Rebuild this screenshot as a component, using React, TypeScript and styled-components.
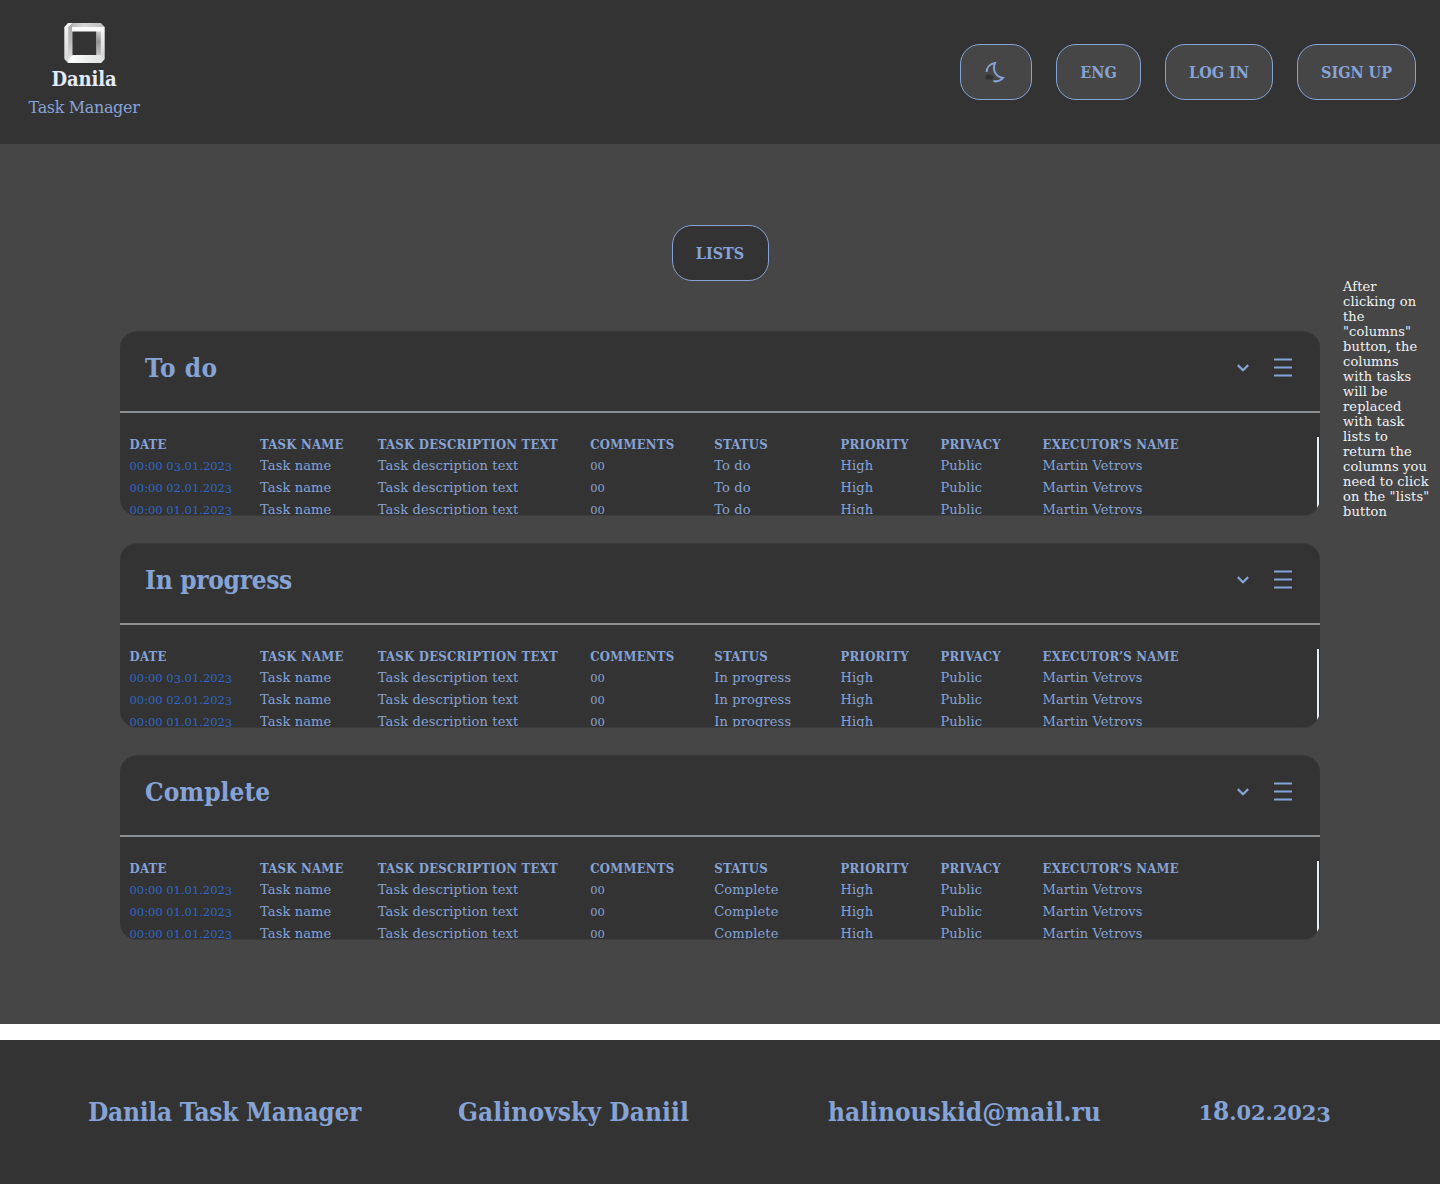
import React from "react";
import styled, { createGlobalStyle } from "styled-components";

const wide = '"DejaVu Serif", "Liberation Serif", serif';
const condensed = '"DejaVu Serif Condensed", "DejaVu Serif", serif';
const blue = "#86a3d6";
const dark = "#333333";
const grey = "#464646";

const GlobalStyle = createGlobalStyle`
  *, *::before, *::after { box-sizing: border-box; }
  body { margin: 0; background: #fff; font-family: ${wide}; }
`;

const Page = styled.div`
  display: flex;
  flex-direction: column;
  gap: 16px;
  width: 1440px;
`;

const Top = styled.div`
  display: flex;
  flex-direction: column;
`;

const Header = styled.header`
  display: flex;
  justify-content: space-between;
  height: 144px;
  padding: 0 24px;
  background: ${dark};
`;

const Brand = styled.div`
  display: flex;
  flex-direction: column;
  align-items: center;
  width: 120px;
  padding-top: 23px;
`;

const BrandName = styled.div`
  font: bold 20px/28px ${condensed};
  letter-spacing: -0.1px;
  color: #e4eaf8;
  margin-top: 2px;
`;

const BrandSub = styled.div`
  font-size: 16px;
  line-height: 24px;
  letter-spacing: -0.35px;
  white-space: nowrap;
  color: ${blue};
  margin-top: 3px;
`;

const Nav = styled.nav`
  display: flex;
  align-items: center;
  gap: 24px;
`;

const Button = styled.button<{ $width: number; $fill?: string }>`
  display: flex;
  align-items: center;
  justify-content: center;
  width: ${(p) => p.$width}px;
  height: 56px;
  padding: 2px 0 0;
  border: 1px solid ${blue};
  border-radius: 20px;
  background: ${(p) => p.$fill ?? grey};
  color: ${blue};
  font: bold 16px/24px ${condensed};
  white-space: nowrap;
`;

const IconButton = styled(Button)`
  padding: 0;
`;

const Main = styled.main`
  display: grid;
  grid-template-columns: 1200px 120px;
  align-items: start;
  height: 880px;
  padding: 81px 0 0 120px;
  background: ${grey};
`;

const Board = styled.section`
  display: flex;
  flex-direction: column;
  align-items: center;
  gap: 50px;
`;

const Cards = styled.div`
  display: flex;
  flex-direction: column;
  gap: 27px;
  width: 100%;
`;

const Card = styled.article`
  display: flex;
  flex-direction: column;
  height: 185px;
  border: solid #3c3c3c;
  border-width: 1px 0;
  border-radius: 17px;
  overflow: hidden;
  background: ${dark};
`;

const CardHead = styled.div`
  display: flex;
  align-items: center;
  flex: none;
  height: 81px;
  padding: 0 28px 8px 25px;
  border-bottom: 2px solid #8c8f92;
`;

const CardTitle = styled.h2<{ $spacing: number }>`
  flex: 1;
  margin: 0;
  font: bold 26px/34px ${condensed};
  letter-spacing: ${(p) => p.$spacing}px;
  color: ${blue};
`;

const Icons = styled.div`
  display: flex;
  align-items: center;
  gap: 25px;
`;

const CardBody = styled.div`
  display: flex;
  justify-content: space-between;
  padding: 24px 1px 0 9.5px;
`;

const Table = styled.div`
  display: flex;
  flex-direction: column;
  margin-top: -4px;
`;

const Row = styled.div`
  display: grid;
  grid-template-columns: 130.5px 117.8px 212.5px 124px 126.2px 100px 102px 150px;
  height: 22px;
  color: ${blue};
  white-space: nowrap;
`;

const HeadCell = styled.div`
  padding-top: 1px;
  font: bold 13px/22px ${condensed};
  letter-spacing: 0.24px;
`;

const Cell = styled.div`
  font-size: 13px;
  line-height: 22px;
  letter-spacing: 0.12px;
`;

const CountCell = styled(Cell)`
  font-size: 11.5px;
  letter-spacing: 0;
`;

const DateCell = styled(CountCell)`
  color: #3067c8;
`;

const LowDigit = styled.span<{ $drop: number }>`
  line-height: 1;
  vertical-align: -${(p) => p.$drop}px;
`;

const TallDigit = styled.span`
  font: bold 26px/1 ${condensed};
`;

const Scroll = styled.div`
  width: 2px;
  height: 90px;
  background: #e6edfa;
`;

const Note = styled.aside`
  padding: 54px 0 0 23px;
  font-size: 13px;
  line-height: 15px;
  letter-spacing: 0.12px;
  color: #f2f2f2;
  white-space: pre;
`;

const Footer = styled.footer`
  display: grid;
  grid-template-columns: 370px 370px 370.5px 1fr;
  align-items: center;
  height: 144px;
  padding-left: 88px;
  background: ${dark};
`;

const FooterText = styled.div<{ $spacing: number }>`
  font: bold 26px/34px ${condensed};
  letter-spacing: ${(p) => p.$spacing}px;
  color: ${blue};
  white-space: nowrap;
`;

const FooterDate = styled(FooterText)`
  padding-top: 2px;
  font: bold 21px/34px ${wide};
`;

const Logo = () => (
  <svg width="41" height="40" viewBox="0 0 41 40">
    <defs>
      <linearGradient id="top" x1="0" x2="1"><stop stopColor="#b5b5b5" /><stop offset=".45" stopColor="#d6d6d6" /><stop offset="1" stopColor="#bdbdbd" /></linearGradient>
      <linearGradient id="left" x1="0" y1="0" x2="0" y2="1"><stop stopColor="#f4f4f4" /><stop offset="1" stopColor="#d4d8d6" /></linearGradient>
      <linearGradient id="innerLeft" x1="0" y1="0" x2="0" y2="1"><stop stopColor="#aaa" /><stop offset=".5" stopColor="#b9b9b9" /><stop offset="1" stopColor="#dedede" /></linearGradient>
      <linearGradient id="right" x1="0" y1="0" x2="0" y2="1"><stop stopColor="#f8f8f8" /><stop offset="1" stopColor="#cdd0ce" /></linearGradient>
      <linearGradient id="innerRight" x1="0" y1="0" x2="0" y2="1"><stop stopColor="#ddd" /><stop offset=".5" stopColor="#929292" /><stop offset="1" stopColor="#c2c2c2" /></linearGradient>
      <linearGradient id="bottom" x1="0" x2="1"><stop stopColor="#fff" /><stop offset="1" stopColor="#dce0dd" /></linearGradient>
    </defs>
    <path d="M4 0H36.8L40.7 4L36 8H4Z" fill="url(#top)" />
    <path d="M4 0H8V36L4 40L.3 36V4Z" fill="url(#left)" />
    <path d="M4.3 4L8.5 0V32L4.3 36Z" fill="url(#innerLeft)" />
    <path d="M36.8 4H40.7V36L37 40H32.5V8Z" fill="url(#right)" />
    <path d="M32.5 5H36.8V32H32.5Z" fill="url(#innerRight)" />
    <path d="M5 36L8.5 32H36.8L40.5 36L37 40H4Z" fill="url(#bottom)" />
    <path d="M8 4H36.8V8.5H8Z" fill="#fafafa" />
  </svg>
);

const Moon = () => (
  <svg width="24" height="24" viewBox="0 0 24 24" fill="none">
    <circle cx="4.2" cy="17" r="2.8" fill={dark} />
    <circle cx="7.2" cy="17.6" r="2.3" fill={dark} />
    <path
      d="M2.7 12C2.6 7.8 5.5 4 11 3.1C8.5 9 10.5 16.4 19 17.9C16.4 20.8 12.5 21.8 9.4 21.1"
      stroke={blue}
      strokeWidth="2"
    />
  </svg>
);

const Chevron = () => (
  <svg width="12" height="8" viewBox="0 0 12 8" fill="none">
    <path d="M.8 1.1L6 6.2L11.2 1.1" stroke={blue} strokeWidth="2.2" />
  </svg>
);

const Burger = () => (
  <svg width="18" height="19" viewBox="0 0 18 19">
    <path d="M0 .5H18V2.5H0ZM0 8.5H18V10.5H0ZM0 16.5H18V18.5H0Z" fill={blue} />
  </svg>
);

const OldStyle = ({ text, drop, tall }: { text: string; drop: number; tall?: boolean }) => (
  <>
    {text.split(/([38])/).map((part, i) => {
      if (part === "3") return <LowDigit key={i} $drop={drop}>{part}</LowDigit>;
      if (part === "8" && tall) return <TallDigit key={i}>{part}</TallDigit>;
      return part;
    })}
  </>
);

const headings = ["DATE", "TASK NAME", "TASK DESCRIPTION TEXT", "COMMENTS", "STATUS", "PRIORITY", "PRIVACY", "EXECUTOR’S NAME"];

const lists = [
  { title: "To do", spacing: 0.5, dates: ["03.01.2023", "02.01.2023", "01.01.2023"] },
  { title: "In progress", spacing: -0.3, dates: ["03.01.2023", "02.01.2023", "01.01.2023"] },
  { title: "Complete", spacing: 0.05, dates: ["01.01.2023", "01.01.2023", "01.01.2023"] },
];

const note = `After
clicking on
the
"columns"
button, the
columns
with tasks
will be
replaced
with task
lists to
return the
columns you
need to click
on the "lists"
button`;

const TaskList = ({ title, spacing, dates }: (typeof lists)[number]) => (
  <Card>
    <CardHead>
      <CardTitle $spacing={spacing}>{title}</CardTitle>
      <Icons>
        <Chevron />
        <Burger />
      </Icons>
    </CardHead>
    <CardBody>
      <Table>
        <Row>
          {headings.map((h) => (
            <HeadCell key={h}>{h}</HeadCell>
          ))}
        </Row>
        {dates.map((date, i) => (
          <Row key={i}>
            <DateCell>
              <OldStyle text={`00:00 ${date}`} drop={1} />
            </DateCell>
            <Cell>Task name</Cell>
            <Cell>Task description text</Cell>
            <CountCell>00</CountCell>
            <Cell>{title}</Cell>
            <Cell>High</Cell>
            <Cell>Public</Cell>
            <Cell>Martin Vetrovs</Cell>
          </Row>
        ))}
      </Table>
      <Scroll />
    </CardBody>
  </Card>
);

export default function App() {
  return (
    <Page>
      <GlobalStyle />
      <Top>
        <Header>
          <Brand>
            <Logo />
            <BrandName>Danila</BrandName>
            <BrandSub>Task Manager</BrandSub>
          </Brand>
          <Nav>
            <IconButton $width={72} aria-label="Theme">
              <Moon />
            </IconButton>
            <Button $width={85}>ENG</Button>
            <Button $width={108}>LOG IN</Button>
            <Button $width={119}>SIGN UP</Button>
          </Nav>
        </Header>
        <Main>
          <Board>
            <Button $width={97} $fill={dark}>LISTS</Button>
            <Cards>
              {lists.map((list) => (
                <TaskList key={list.title} {...list} />
              ))}
            </Cards>
          </Board>
          <Note>{note}</Note>
        </Main>
      </Top>
      <Footer>
        <FooterText $spacing={-0.25}>Danila Task Manager</FooterText>
        <FooterText $spacing={0.1}>Galinovsky Daniil</FooterText>
        <FooterText $spacing={0}>halinouskid@mail.ru</FooterText>
        <FooterDate $spacing={-0.1}>
          <OldStyle text="18.02.2023" drop={2} tall />
        </FooterDate>
      </Footer>
    </Page>
  );
}
